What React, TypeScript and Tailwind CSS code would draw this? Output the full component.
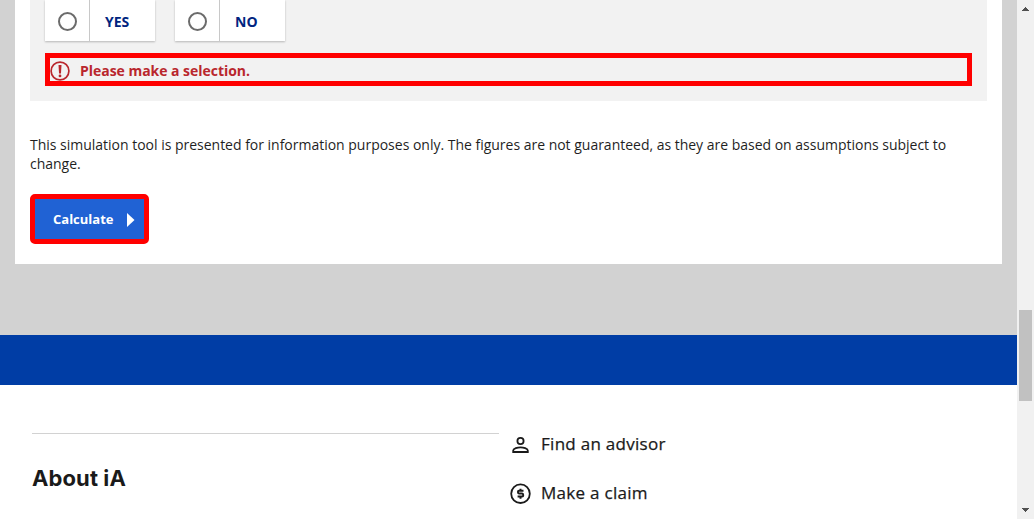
function Choice({ label }: { label: string }) {
  return (
    <label className="flex h-[41px] w-[110px] bg-white text-[14px] font-bold text-[#00257f] shadow-[0_1px_2px_rgba(0,0,0,0.25)]">
      <span className="flex w-[45px] items-center justify-center border-r border-[#c8c8c8] pt-[2px]">
        <span className="size-[19px] rounded-full border-2 border-[#6b6b6b]" />
      </span>
      <span className="pl-[15px] leading-[43px]">{label}</span>
    </label>
  );
}

function AlertIcon() {
  return (
    <svg className="size-[20px] shrink-0" viewBox="0 0 20 20" fill="none">
      <circle cx="10" cy="10" r="8.9" stroke="#b9272d" strokeWidth="1.7" />
      <path d="M8.5 4h3l-.5 8.4H9z" fill="#b9272d" />
      <circle cx="10" cy="14.9" r="1.4" fill="#b9272d" />
    </svg>
  );
}

function PersonIcon() {
  return (
    <svg className="size-[22px] shrink-0" viewBox="0 0 22 22" fill="none" stroke="#1a1a1a" strokeWidth="1.8">
      <circle cx="10.5" cy="8" r="3.1" />
      <path d="M3.2 19v-1.5c0-2.2 4.5-3.2 7.3-3.2s7.3 1 7.3 3.2V19z" />
    </svg>
  );
}

function ClaimIcon() {
  return (
    <svg className="size-[22px] shrink-0" viewBox="0 0 22 22" fill="none" stroke="#1a1a1a">
      <circle cx="10.5" cy="11.7" r="9.3" strokeWidth="1.8" />
      <path d="M13.5 8.7H9c-1.4 0-1.4 2.8 0 2.9h3.1c1.5.1 1.5 3 0 3H7.6M10.5 6.7v2m0 6v2" strokeWidth="2" />
    </svg>
  );
}

function Scrollbar() {
  return (
    <div className="flex w-[17px] shrink-0 flex-col items-center bg-[#f1f1f1]">
      <svg className="h-[17px] w-[17px] shrink-0" viewBox="0 0 17 17" shapeRendering="crispEdges">
        <path d="M5 10h7v1H5zM6 9h5v1H6zM7 8h3v1H7zM8 7h1v1H8z" fill="#505050" />
      </svg>
      <div className="mt-[293px] h-[91px] w-[13px] bg-[#c1c1c1]" />
      <svg className="mt-auto h-[17px] w-[17px] shrink-0" viewBox="0 0 17 17" shapeRendering="crispEdges">
        <path d="M5 6h7v1H5zM6 7h5v1H6zM7 8h3v1H7zM8 9h1v1H8z" fill="#505050" />
      </svg>
    </div>
  );
}

export default function App() {
  return (
    <div className="flex h-[519px] w-[1034px] overflow-hidden bg-white font-['Open_Sans',sans-serif]">
      <div className="flex w-[1017px] shrink-0 flex-col">
        <main className="h-[335px] shrink-0 bg-[#d2d2d2] px-[15px]">
          <div className="h-[264px] w-[987px] bg-white px-[15px]">
            <section className="h-[101px] bg-[#f2f2f2] px-[15px]">
              <div className="flex gap-5">
                <Choice label="YES" />
                <Choice label="NO" />
              </div>
              <div className="mt-3 flex h-[33px] items-center border-[5px] border-[#ff0000] pt-[2px] text-[14px] font-bold tracking-[-0.03px] text-[#b9272d]">
                <AlertIcon />
                <span className="pl-[10px] leading-[19px]">Please make a selection.</span>
              </div>
            </section>
            <p className="mt-[34px] text-[14px] leading-[19px] tracking-[-0.012px] text-[#1f1f1f]">
              This simulation tool is presented for information purposes only. The figures are not guaranteed, as they are based on assumptions subject to change.
            </p>
            <button className="mt-[21px] flex h-[50px] w-[119px] items-center rounded-[5px] border-[5px] border-[#ff0000] bg-[#2062d4] pt-px pl-[18px] text-[13px] font-bold text-white">
              <span className="pt-px">Calculate</span>
              <svg className="ml-[14px] h-[14px] w-[8px]" viewBox="0 0 8 14">
                <path d="M0 0l7.5 7L0 14z" fill="white" />
              </svg>
            </button>
          </div>
        </main>
        <div className="h-[50px] shrink-0 bg-[#003da5]" />
        <footer className="flex pl-8 text-[#1a1a1a]">
          <div className="mt-12 w-[467px] border-t border-[#d2d2d2]">
            <h2 className="mt-[29px] font-['Inter',sans-serif] text-[22px] leading-[30px] font-bold tracking-[0.1px]">About iA</h2>
          </div>
          <nav className="ml-[11px] mt-[47px] flex flex-col gap-[25px] text-[17px] leading-6 font-medium tracking-[0.28px] [-webkit-text-stroke:0.25px_#1a1a1a]">
            <a className="flex items-center gap-[9px]"><PersonIcon />Find an advisor</a>
            <a className="flex items-center gap-[9px]"><ClaimIcon />Make a claim</a>
          </nav>
        </footer>
      </div>
      <Scrollbar />
    </div>
  );
}
